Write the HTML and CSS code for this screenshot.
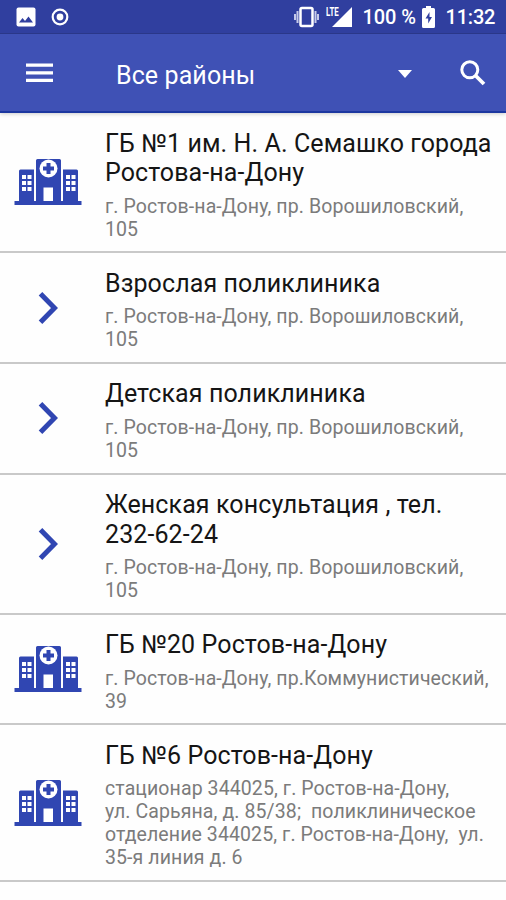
FILE: index.html
```html
<!DOCTYPE html>
<html lang="ru">
<head>
<meta charset="utf-8">
<title>Все районы</title>
<link rel="stylesheet" href="styles.css">
</head>
<body>
<svg class="defs" aria-hidden="true">
<symbol id="hospital" viewBox="0 0 68 48">
<path fill="currentColor" d="M22 1.5Q22 0 23.500 0H45.500Q47 0 47 1.500V42H22zM5 12Q5 10.500 6.500 10.500H20V42H5zM49 10.500H62.500Q64 10.500 64 12V42H49zM.5 42H67.500V46H.5z"/>
<path fill="#fff" d="M29.500 28.500H39V42H29.500zM8 16h4v4H8zM13.500 16h4v4h-4zM8 22h4v4H8zM13.500 22h4v4h-4zM8 28h4v4H8zM13.500 28h4v4h-4zM52 16h4v4h-4zM57.500 16h4v4h-4zM52 22h4v4h-4zM57.500 22h4v4h-4zM52 28h4v4h-4zM57.500 28h4v4h-4z"/>
<circle cx="34.500" cy="9.500" r="9" fill="#fff"/>
<path fill="currentColor" d="M32.500 4h4v3.500H40v4h-3.500V15h-4v-3.500H29v-4h3.500z"/>
</symbol>
<symbol id="chevron" viewBox="0 0 24 36"><path fill="none" stroke="currentColor" stroke-width="5" d="M3.500 3.700L17.500 18L3.500 32.300"/></symbol>
</svg>
<header>
<div class="status">
<svg class="photo" viewBox="0 0 20 20"><rect x=".5" y=".5" width="19" height="19" rx="2" fill="#fff"/><path fill="#303f9f" d="M3 15.500L6.500 11l2.500 3 3.500-4.500 4.500 6z"/></svg>
<svg class="record" viewBox="0 0 18 18"><circle cx="9" cy="9" r="7.300" fill="none" stroke="#fff" stroke-width="2.200"/><circle cx="9" cy="9" r="3.400" fill="#fff"/></svg>
<svg class="vibrate" viewBox="0 0 25 22"><rect x="6.500" y="2" width="12" height="18" rx="1.500" fill="none" stroke="#fff" stroke-width="2.500"/><path stroke="#c5cae9" stroke-width="2" d="M3.500 5v12M1 8v6M21.500 5v12M24 8v6"/></svg>
<div class="signal"><span class="lte">LTE</span><svg viewBox="0 0 20 20"><path fill="#fff" d="M20 0V20H0z"/></svg></div>
<span class="percent">100 %</span>
<svg class="battery" viewBox="0 0 13 22"><path fill="#fff" d="M4 0h5v2h2.500Q13 2 13 3.500V20.500Q13 22 11.500 22h-10Q0 22 0 20.500V3.500Q0 2 1.500 2H4z"/><path fill="#303f9f" d="M7.500 6L3.500 12.500h2.700v5l3.800-6.500H7.500z"/></svg>
<span class="clock">11:32</span>
</div>
<div class="toolbar">
<svg class="menu" viewBox="0 0 27 20"><path stroke="#fff" stroke-width="3.200" d="M0 2.200h27M0 9.800h27M0 17.400h27"/></svg>
<span class="region">Все районы</span>
<svg class="caret" viewBox="0 0 14 8"><path fill="#fff" d="M0 0h14L7 8z"/></svg>
<svg class="search" viewBox="0 0 26 26"><circle cx="9.800" cy="9.800" r="8" fill="none" stroke="#fff" stroke-width="3"/><path stroke="#fff" stroke-width="3.800" d="M15.500 15.500L24 24"/></svg>
</div>
</header>
<main>
<article><div class="mark"><svg class="hospital"><use href="#hospital"/></svg></div><div class="text"><h2>ГБ №1 им. Н. А. Семашко города<br>Ростова-на-Дону</h2><p>г. Ростов-на-Дону, пр. Ворошиловский,<br>105</p></div></article>
<article><div class="mark"><svg class="chevron"><use href="#chevron"/></svg></div><div class="text"><h2>Взрослая поликлиника</h2><p>г. Ростов-на-Дону, пр. Ворошиловский,<br>105</p></div></article>
<article><div class="mark"><svg class="chevron"><use href="#chevron"/></svg></div><div class="text"><h2>Детская поликлиника</h2><p>г. Ростов-на-Дону, пр. Ворошиловский,<br>105</p></div></article>
<article><div class="mark"><svg class="chevron"><use href="#chevron"/></svg></div><div class="text"><h2>Женская консультация , тел.<br>232-62-24</h2><p>г. Ростов-на-Дону, пр. Ворошиловский,<br>105</p></div></article>
<article><div class="mark"><svg class="hospital"><use href="#hospital"/></svg></div><div class="text"><h2>ГБ №20 Ростов-на-Дону</h2><p>г. Ростов-на-Дону, пр.Коммунистический,<br>39</p></div></article>
<article><div class="mark"><svg class="hospital"><use href="#hospital"/></svg></div><div class="text"><h2>ГБ №6 Ростов-на-Дону</h2><p>стационар 344025, г. Ростов-на-Дону,<br>ул. Сарьяна, д. 85/38;&nbsp; поликлиническое<br>отделение 344025, г. Ростов-на-Дону,&nbsp; ул.<br>35-я линия д. 6</p></div></article>
</main>
</body>
</html>
```
FILE: styles.css
```css
* { box-sizing: border-box; }
body { margin: 0; height: 900px; overflow: hidden; background: #fefefe; font-family: Roboto, sans-serif; }
svg { display: block; flex: none; }
.defs { display: none; }
header { height: 113px; color: #fff; background: #3f51b5; border-bottom: 2px solid #1c37a0; box-shadow: 0 1px 4px #0003; }
.status { height: 34px; display: flex; align-items: center; padding: 1px 10px 0 16px; background: #303f9f; border-bottom: 1px solid #2a3789; font-size: 20px; font-weight: 500; }
.photo { width: 20px; height: 20px; }
.record { width: 18px; height: 18px; margin-left: 14.500px; }
.vibrate { width: 25px; height: 22px; margin-left: 225px; }
.signal { position: relative; width: 26px; height: 20px; margin-left: 7px; }
.signal svg { width: 20px; height: 20px; margin-left: 6px; }
.lte { position: absolute; left: 0; top: -1px; font-size: 12.500px; line-height: 11px; font-weight: 700; transform: scaleX(.63); transform-origin: 0 0; }
.percent { width: 52px; margin-left: 11px; white-space: nowrap; letter-spacing: -.1px; }
.battery { width: 13px; height: 22px; margin-left: 7px; }
.clock { margin-left: 11px; white-space: nowrap; letter-spacing: -.2px; }
.toolbar { height: 77px; display: flex; align-items: center; padding: 3px 20px 0 26px; }
.menu { width: 27px; height: 20px; margin-top: -2px; }
.region { flex: 1; margin-left: 63px; padding-top: 2px; font-size: 25px; letter-spacing: .1px; }
.caret { width: 14px; height: 8px; margin-right: 48px; }
.search { width: 26px; height: 26px; margin-top: -2px; }
article { display: flex; align-items: center; border-bottom: 2px solid #c9c9c9; }
.mark { width: 105px; flex: none; color: #3046b2; }
.hospital { width: 68px; height: 48px; margin: 2px 0 0 14px; }
.chevron { width: 24px; height: 36px; margin-left: 37px; }
.text { padding: 15.500px 0 10.700px; white-space: nowrap; }
h2 { margin: 0; font-size: 25px; line-height: 29.500px; font-weight: 400; letter-spacing: .1px; color: #151515; }
p { margin: 7px 0 0; font-size: 19.500px; line-height: 23px; letter-spacing: .1px; color: #7b7b7b; }
```
